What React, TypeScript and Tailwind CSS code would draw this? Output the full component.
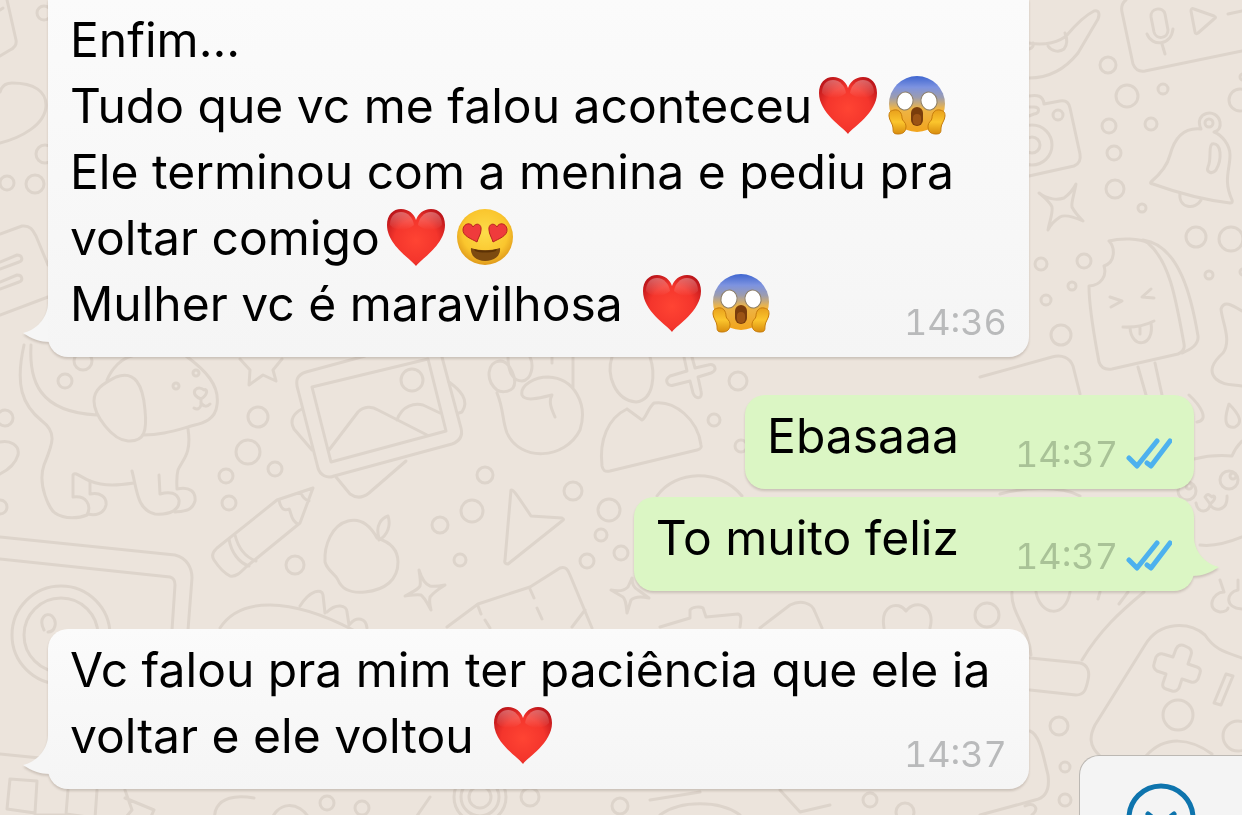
import { ReactNode } from 'react'

const Heart = () => (
  <svg viewBox="0 0 70 60" role="img" aria-label="coração" className="inline-block h-[60px] w-[70px] align-[-12px]">
    <defs>
      <radialGradient id="heart" cx="50%" cy="55%" r="62%">
        <stop offset="0" stopColor="#ff4433" />
        <stop offset="0.6" stopColor="#f4352c" />
        <stop offset="1" stopColor="#bd161b" />
      </radialGradient>
      <linearGradient id="heartShine" x1="0" y1="0" x2="0" y2="1">
        <stop offset="0" stopColor="#fff" stopOpacity="0.32" />
        <stop offset="1" stopColor="#fff" stopOpacity="0" />
      </linearGradient>
    </defs>
    <path
      d="M36 59C31 52 7 38 7 18C7 8 13 2 21 2C29 2 34 7 36 13C38 7 43 2 51 2C59 2 65 8 65 18C65 38 41 52 36 59Z"
      fill="url(#heart)"
    />
    <path d="M10 18C10 9 15 5 21 5C28 5 33 11 34 18C28 24 16 25 10 18Z" fill="url(#heartShine)" />
    <path d="M38 18C39 11 44 5 51 5C57 5 62 9 62 18C56 25 44 24 38 18Z" fill="url(#heartShine)" />
  </svg>
)

const Scream = () => (
  <svg viewBox="0 0 70 60" role="img" aria-label="rosto gritando" className="inline-block h-[60px] w-[70px] align-[-12px]">
    <defs>
      <linearGradient id="screamFace" x1="0" y1="0" x2="0" y2="1">
        <stop offset="0" stopColor="#3f66d0" />
        <stop offset="0.2" stopColor="#7d93e0" />
        <stop offset="0.38" stopColor="#9b9cb0" />
        <stop offset="0.58" stopColor="#edb548" />
        <stop offset="1" stopColor="#f2a41c" />
      </linearGradient>
      <linearGradient id="screamHand" x1="0" y1="0" x2="0" y2="1">
        <stop offset="0" stopColor="#e8a01c" />
        <stop offset="0.5" stopColor="#fbc52d" />
        <stop offset="1" stopColor="#d98d0e" />
      </linearGradient>
    </defs>
    <ellipse cx="35" cy="29" rx="28" ry="28" fill="url(#screamFace)" />
    <ellipse cx="23" cy="26" rx="8" ry="9" fill="#fff" stroke="#8b7d66" strokeWidth="1" transform="rotate(14 23 26)" />
    <ellipse cx="47" cy="26" rx="8" ry="9" fill="#fff" stroke="#8b7d66" strokeWidth="1" transform="rotate(-14 47 26)" />
    <rect x="29" y="32" width="12" height="19" rx="6" fill="#7a3d0c" />
    <rect x="31" y="39" width="8" height="11" rx="4" fill="#9c5415" />
    <path
      d="M12 35C17 34 20 38 20 43C20 46 24 47 24 51C24 57 21 59 16 59C11 59 11 57 11 53C11 49 7 45 7 41C7 37 8 36 12 35Z"
      fill="url(#screamHand)"
      stroke="#c77c0c"
      strokeWidth="1"
    />
    <path
      d="M58 35C53 34 50 38 50 43C50 46 46 47 46 51C46 57 49 59 54 59C59 59 59 57 59 53C59 49 63 45 63 41C63 37 62 36 58 35Z"
      fill="url(#screamHand)"
      stroke="#c77c0c"
      strokeWidth="1"
    />
  </svg>
)

const HeartEyes = () => (
  <svg viewBox="0 0 70 60" role="img" aria-label="rosto apaixonado" className="inline-block h-[60px] w-[70px] align-[-12px]">
    <defs>
      <radialGradient id="loveFace" cx="50%" cy="42%" r="58%">
        <stop offset="0" stopColor="#fddc4a" />
        <stop offset="0.7" stopColor="#fac62e" />
        <stop offset="1" stopColor="#e09a1b" />
      </radialGradient>
    </defs>
    <circle cx="35" cy="30" r="28" fill="url(#loveFace)" />
    <path d="M27 35C22 32 12 29 13 22C14 16 21 15 23 20C26 15 32 17 31 23C31 27 28 31 27 35Z" fill="#ef3b3c" stroke="#b82320" strokeWidth="1" />
    <path d="M43 35C48 32 58 29 57 22C56 16 49 15 47 20C44 15 38 17 39 23C39 27 42 31 43 35Z" fill="#ef3b3c" stroke="#b82320" strokeWidth="1" />
    <path d="M21 41C30 44 40 44 50 41C51 49 44 54 35 54C27 54 20 49 21 41Z" fill="#7c4a10" />
    <path d="M24 42C32 44 39 44 47 42L46 44C39 46 31 46 25 44Z" fill="#5d3205" />
  </svg>
)

const circles = [
  [1108, 65, 8], [1127, 96, 11], [1163, 89, 5], [1109, 126, 7], [1151, 124, 6], [1114, 153, 7],
  [1115, 189, 9], [1142, 208, 4], [1240, 100, 11], [1243, 77, 3], [1058, 115, 5], [1032, 145, 20],
  [1032, 145, 8], [1209, 123, 4], [1041, 264, 6], [1084, 261, 7], [1072, 286, 4], [1046, 300, 5],
  [1061, 335, 10], [1196, 237, 10], [1231, 239, 12], [1209, 275, 4], [1243, 272, 3], [176, 386, 3],
  [196, 373, 3], [83, 361, 9], [65, 381, 7], [5, 418, 8], [258, 417, 10], [248, 452, 12],
  [275, 469, 7], [226, 476, 7], [229, 503, 7], [295, 565, 9], [0, 507, 7], [61, 635, 49],
  [61, 635, 37], [412, 380, 11], [485, 475, 8], [440, 525, 8], [472, 511, 11], [460, 560, 6],
  [573, 491, 9], [609, 510, 11], [601, 535, 6], [621, 553, 7], [587, 561, 7], [738, 381, 9],
  [714, 420, 6], [741, 446, 6], [1229, 480, 9], [1187, 491, 9], [1233, 476, 3], [1189, 486, 3],
  [987, 615, 12], [1178, 715, 15], [1238, 736, 15], [1059, 726, 9], [1065, 767, 5], [1065, 800, 6],
  [44, 13, 7], [45, 154, 9], [7, 183, 7], [35, 184, 9], [327, 803, 7], [362, 808, 7],
  [480, 797, 26], [480, 797, 19], [480, 797, 11], [530, 797, 9], [526, 828, 9], [620, 806, 8],
  [870, 800, 7], [905, 812, 9],
]

const doodles = [
  // whale tail
  'M1029 43C1045 46 1060 42 1067 35C1078 22 1088 14 1094 11C1099 10 1100 14 1098 19L1078 53C1066 68 1050 78 1029 78',
  'M1048 46C1051 51 1059 53 1064 49C1068 44 1067 38 1065 33M1029 49Q1034 48 1033 43',
  // voice note card
  'M1126 0C1122 3 1121 7 1122 12L1133 64C1135 69 1139 72 1145 71L1242 51',
  'M1151 17C1150 8 1163 6 1165 14L1168 30C1168 39 1156 40 1154 32ZM1147 34C1152 47 1171 46 1173 29M1162 44L1165 54',
  'M1191 11C1191 9 1192 8 1194 9L1214 16C1216 17 1216 18 1214 19L1198 33C1197 34 1195 34 1195 32ZM1228 14L1242 11',
  // camera
  'M1029 96C1037 95 1043 95 1044 104L1060 101C1066 100 1069 103 1070 108L1080 154C1081 160 1079 164 1074 166L1029 176M1029 107H1034C1040 107 1040 113 1034 114L1029 116',
  // sparkles
  'M1039 193C1048 200 1058 200 1064 198C1071 193 1074 188 1076 184C1074 195 1071 203 1072 207C1075 213 1078 216 1083 221C1074 217 1065 214 1060 217C1054 221 1050 225 1048 230C1050 220 1053 213 1052 207C1050 202 1045 198 1039 193Z',
  'M419 570C422 580 425 584 430 586C435 587 440 586 445 585C437 590 433 593 430 597C429 602 430 606 431 610C427 603 425 598 421 595C417 594 412 595 405 596C412 592 418 590 420 586C421 582 420 576 419 570Z',
  'M632 578C632 585 634 588 638 590L649 598C640 596 634 597 631 600L627 613C626 604 626 600 623 597L611 590C620 592 625 590 628 587Z',
  // bell
  'M1201 129C1183 127 1174 140 1170 155C1167 167 1158 176 1151 182C1150 183 1151 184 1153 184C1178 193 1205 200 1230 203C1232 203 1233 202 1232 200C1223 180 1230 170 1230 155C1230 145 1222 135 1214 132M1201 129C1193 112 1217 107 1220 122C1221 128 1218 131 1214 132',
  'M1212 144C1222 142 1222 160 1216 170C1212 175 1206 172 1208 167C1212 158 1208 147 1212 144M1180 193C1178 209 1196 210 1201 200',
  // ice cream
  'M1109 241C1115 247 1116 262 1104 266C1107 275 1102 285 1089 286C1089 310 1095 340 1099 362C1101 368 1105 370 1112 369L1178 354C1183 352 1185 349 1184 344C1176 300 1170 262 1148 243C1140 238 1120 238 1109 241',
  'M1143 240C1180 245 1192 300 1198 336C1199 345 1190 350 1182 353M1138 367L1146 395M1155 363L1162 395',
  'M1110 297L1122 301L1111 307M1151 289L1142 297L1154 298M1123 327Q1140 328 1154 321M1130 327C1131 350 1155 347 1151 323M1140 327V334',
  'M980 377L1052 357C1062 354 1070 358 1073 366L1080 394',
  'M1242 311C1232 305 1224 300 1221 309C1222 322 1232 340 1223 353C1213 362 1208 371 1216 379C1224 386 1232 384 1242 386',
  // dog
  'M24 345C15 385 22 405 42 421C58 433 52 445 44 465C37 485 50 510 55 513C65 520 80 518 87 515C92 505 86 495 73 497V475C75 471 82 478 90 481C105 487 120 485 134 483',
  'M31 345C29 380 38 412 97 415M94 401C94 388 105 383 116 377C135 370 143 385 145 410C147 430 145 442 128 441C112 440 94 415 94 401ZM107 380C112 368 122 358 132 356',
  'M186 356C205 370 220 385 217 405C215 424 195 424 188 427C170 432 160 435 143 435M188 429C192 455 182 460 178 470C176 478 177 485 177 489C190 486 196 492 195 501C192 511 185 511 175 512',
  'M90 481V494C100 492 107 497 106 505C104 514 95 516 88 514M132 471C137 490 137 510 155 514C170 515 180 510 179 500C177 493 170 491 160 494L159 475',
  'M195 390C198 387 202 388 204 390C207 388 209 394 201 399C196 397 193 394 195 390M201 399V405C200 409 197 410 194 408M201 403C204 407 207 407 210 404',
  'M0 442C10 440 20 445 18 455C15 465 8 470 0 474',
  'M240 359L250 370L249 385L263 375L276 381L273 370L282 359',
  // screen
  'M0 537L175 555C187 558 192 568 192 578L188 630M0 559L170 577C174 578 175 581 175 585L172 630M44 630C38 618 46 612 52 616C58 622 55 632 48 632',
  // pencil
  'M214 560C210 554 215 550 217 548L277 500L313 488L300 523L246 567C240 573 236 577 230 576C224 573 218 566 214 560ZM229 539C231 552 239 563 249 566M235 535C238 547 245 557 256 561M279 500C281 510 285 511 289 509C292 513 290 520 298 524M301 493C303 498 305 500 309 501',
  // dinosaur back
  'M220 628C240 597 290 597 353 630M300 606C310 590 322 588 323 595L325 613M327 612C336 603 347 605 347 612L349 625M350 624C357 616 366 618 367 628',
  // photos
  'M365 356L306 372C297 375 295 380 298 390L318 468C320 475 327 479 334 476L452 444C460 441 463 436 461 428L442 357M428 359L312 387L331 462L446 431Z',
  'M329 450L358 412C364 406 372 406 378 410L427 435M397 420C402 405 415 403 423 405L440 413M302 409C294 413 289 420 294 429L312 450M449 382C460 390 470 400 462 412L459 413M336 477L350 494C357 499 364 497 369 493L406 461',
  // hand
  'M497 390C485 380 487 362 500 361C510 361 518 380 513 388C508 393 500 392 497 390M508 357C508 375 515 381 522 381C532 380 534 365 530 357M497 393C504 410 502 420 507 433C520 462 565 460 580 430C588 405 575 378 548 377C535 377 520 385 522 395C525 402 540 398 552 395C548 402 552 410 555 417M573 357V388M552 357V363',
  'M511 490C513 489 515 492 531 516L562 518C564 519 564 520 562 521L508 564C506 564 504 563 505 560Z',
  // apple
  'M377 538C370 525 360 518 348 521C332 525 324 545 325 562C328 572 335 573 338 580C343 592 355 593 365 592C385 590 398 580 398 562C398 550 390 542 377 538M379 538C375 525 382 518 388 516C391 525 388 535 379 540',
  // map
  'M447 627L478 604L530 587L560 568C566 566 568 570 570 575L592 628M478 606L481 614M485 620L490 628M530 589L534 598M537 608L542 619M585 610L572 627',
  // egg
  'M612 357C606 375 615 400 636 402C655 400 655 372 650 357M627 409L642 420C646 418 648 408 654 403C675 400 698 420 701 445C702 448 700 449 697 450L610 471C604 472 603 470 602 466C599 440 608 418 627 409',
  'M684 357L687 371L670 376C664 380 667 387 674 385L690 381L693 393C696 400 703 399 701 391L698 377L711 373C718 370 715 363 708 365L695 368L692 357',
  'M657 496C675 470 720 468 742 496M660 627L690 618V610C692 607 700 606 703 608L706 617L738 614C742 615 741 620 740 627',
  'M760 628L790 605C800 600 812 602 815 612L822 628M884 628C880 605 898 600 906 611C916 598 936 606 930 628',
  // cat
  'M1194 459C1210 455 1220 455 1232 456C1235 448 1238 445 1242 441M1205 497C1208 492 1210 496 1212 497C1215 494 1217 499 1210 504ZM1196 503C1198 515 1210 512 1210 504C1213 512 1228 512 1227 496M1200 545C1215 547 1230 542 1242 537',
  'M1189 395C1200 405 1210 420 1197 422M1229 404C1222 425 1228 428 1235 427C1243 423 1240 415 1229 404ZM1000 494C1020 488 1060 485 1080 496',
  'M1220 580L1224 592C1212 592 1206 610 1220 612C1225 612 1228 610 1228 608M1238 580V590C1226 592 1224 608 1242 609',
  // shoe
  'M1012 592C1010 612 1030 630 1031 655M1036 592C1040 615 1065 620 1070 592M1144 592C1120 612 1100 630 1082 660M1030 658L1080 663C1088 665 1090 672 1088 680C1086 690 1084 695 1076 695L1030 690M1100 592L1098 599M1128 592L1119 604',
  // game controller
  'M1100 756C1088 745 1090 735 1095 725L1145 645C1160 620 1190 622 1205 635C1215 650 1225 652 1242 658M1146 756C1165 735 1190 738 1212 754',
  'M1176 649C1178 645 1181 644 1185 646L1189 648C1192 650 1192 652 1191 655L1188 664L1197 667C1200 668 1201 670 1200 673L1198 679C1196 682 1194 683 1191 682L1182 679L1179 688C1177 691 1175 692 1172 691L1166 689C1163 688 1162 686 1163 683L1166 674L1157 671C1154 669 1153 667 1154 664L1156 657C1158 654 1160 653 1163 654L1173 657Z',
  'M1226 674L1233 676L1221 705L1214 703Z',
  'M1030 731C1040 735 1043 755 1048 775C1050 790 1045 798 1035 800L980 815M1025 806C1034 802 1040 808 1032 815',
  'M7 0L16 40C17 45 14 48 10 50L0 56M0 10L3 8M0 92C2 85 6 83 12 83C35 83 46 92 46 105C46 125 20 138 0 143',
  'M0 234L22 226C30 225 33 230 36 236L48 265M0 315L48 297M0 262L17 255C23 255 23 261 19 262L0 269M0 282L17 275C23 275 23 281 19 282L0 289',
  // chess board
  'M0 754L40 758M10 779L37 781L35 813L7 809ZM68 790L66 814L95 818L97 790M35 815H64V830M125 790L132 810L115 830M125 798L154 810L145 830M254 798C212 790 208 820 222 830M270 825C275 800 300 800 310 820M430 797L410 826M548 830C550 812 566 812 568 830',
  'M650 800L700 792M660 815C680 800 720 800 740 815M780 790L800 812L830 805',
]

const Wallpaper = () => (
  <svg aria-hidden="true" className="absolute inset-0 h-full w-full" fill="none" stroke="#ddd4cb" strokeWidth="3" strokeLinecap="round" strokeLinejoin="round">
    {doodles.map((d) => (
      <path key={d} d={d} />
    ))}
    {circles.map(([cx, cy, r]) => (
      <circle key={`${cx}-${cy}-${r}`} cx={cx} cy={cy} r={r} />
    ))}
  </svg>
)

const Ticks = () => (
  <svg viewBox="0 0 46 32" role="img" aria-label="lida" className="h-8 w-[46px]" fill="none" stroke="#4db1ee" strokeWidth="5" strokeLinecap="round" strokeLinejoin="round">
    <path d="M3 20L11 28L31 3" />
    <path d="M21 25L25 28L44 3" />
  </svg>
)

const tail = 'M26 18C26 33 14 45 1 48C10 54 18 57 28 57H40V18Z'

interface BubbleProps {
  time: string
  sent?: boolean
  hasTail?: boolean
  cutOff?: boolean
  className?: string
  children: ReactNode
}

const Bubble = ({ time, sent, hasTail, cutOff, className = '', children }: BubbleProps) => (
  <li className={`relative drop-shadow-[0_2px_1px_rgba(90,75,60,0.22)] ${sent ? 'self-end' : 'w-[85.6%]'} ${className}`}>
    {hasTail && (
      <svg
        aria-hidden="true"
        viewBox="0 0 40 60"
        className={`absolute bottom-3 h-[60px] w-10 ${sent ? '-right-[26px] -scale-x-100 fill-[#dbf6c4]' : '-left-[26px] fill-[#f6f6f6]'}`}
      >
        <path d={tail} />
      </svg>
    )}
    <div
      className={`relative px-[22px] pt-2 pb-[14px] ${cutOff ? 'rounded-b-[20px]' : 'rounded-[20px]'} ${
        sent ? 'flex items-end gap-14 bg-[#dbf6c4]' : 'grid bg-linear-to-b from-[#fbfbfb] to-[#f5f5f5]'
      }`}
    >
      <p className="col-start-1 row-start-1 pb-[6px] text-[48px] leading-[66px] whitespace-nowrap text-black">{children}</p>
      <div className="col-start-1 row-start-1 flex items-center gap-2 self-end justify-self-end">
        <time className={`text-[36px] leading-[42px] tabular-nums ${sent ? 'text-[#a9c297]' : 'text-[#b9babb]'}`}>{time}</time>
        {sent && <Ticks />}
      </div>
    </div>
  </li>
)

const App = () => {
  return (
    <main className="relative min-h-screen overflow-hidden bg-[#ece4dc] font-[Inter,'Liberation_Sans',sans-serif]">
      <Wallpaper />

      <ul className="relative -mt-px flex flex-col px-12 pb-6">
        <Bubble time="14:36" hasTail cutOff>
          Enfim...
          <br />
          Tudo que vc me falou aconteceu
          <Heart />
          <Scream />
          <br />
          Ele terminou com a menina e pediu pra
          <br />
          voltar comigo
          <Heart />
          <HeartEyes />
          <br />
          Mulher vc é maravilhosa <Heart />
          <Scream />
        </Bubble>
        <Bubble time="14:37" sent className="mt-[38px]">
          Ebasaaa
        </Bubble>
        <Bubble time="14:37" sent hasTail className="mt-2">
          To muito feliz
        </Bubble>
        <Bubble time="14:37" hasTail className="mt-[38px]">
          Vc falou pra mim ter paciência que ele ia
          <br />
          voltar e ele voltou <Heart />
        </Bubble>
      </ul>

      <button
        type="button"
        aria-label="Emojis"
        className="absolute right-0 bottom-0 flex h-[60px] w-[163px] justify-center overflow-hidden rounded-tl-[20px] border-t border-l border-[#bcb8b3] bg-[#f4f4f4] pt-[26px]"
      >
        <svg viewBox="0 0 72 72" className="size-[72px] shrink-0" fill="none" stroke="#0e74ad" strokeWidth="5" strokeLinecap="round">
          <circle cx="36" cy="36" r="32" />
          <path d="M23 32L28 36L26 40M49 32L44 36L46 40M22 48Q36 60 50 48" />
        </svg>
      </button>
    </main>
  )
}

export default App
